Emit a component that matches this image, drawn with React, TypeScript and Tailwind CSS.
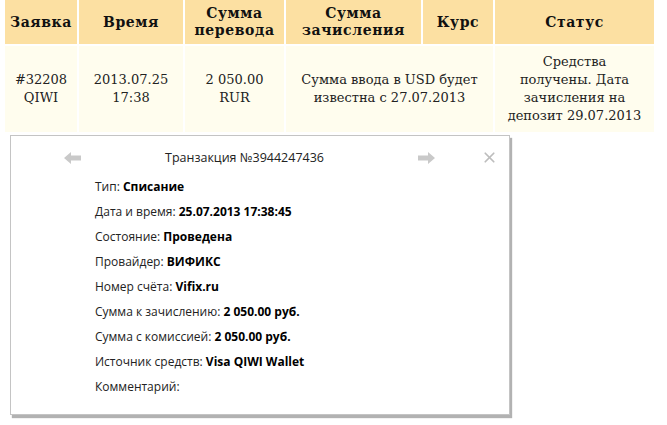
import { X } from "lucide-react";

const cols = [
  { w: "w-[72px]", head: ["Заявка"] },
  { w: "w-[104px]", head: ["Время"] },
  { w: "w-[99px]", head: ["Сумма", "перевода"] },
  { w: "w-[135px]", head: ["Сумма", "зачисления"] },
  { w: "w-[70px]", head: ["Курс"] },
  { w: "w-[159px]", head: ["Статус"] },
];

// Сумма зачисления и курс в строке объединены (colspan)
const cells = [
  { w: "w-[72px]", body: ["#32208", "QIWI"] },
  { w: "w-[104px]", body: ["2013.07.25", "17:38"] },
  { w: "w-[99px]", body: ["2 050.00", "RUR"] },
  { w: "w-[207px]", body: ["Сумма ввода в USD будет", "известна с 27.07.2013"] },
  { w: "w-[159px]", body: ["Средства", "получены. Дата", "зачисления на", "депозит 29.07.2013"] },
];

const rows: [string, string][] = [
  ["Тип:", "Списание"],
  ["Дата и время:", "25.07.2013 17:38:45"],
  ["Состояние:", "Проведена"],
  ["Провайдер:", "ВИФИКС"],
  ["Номер счёта:", "Vifix.ru"],
  ["Сумма к зачислению:", "2 050.00 руб."],
  ["Сумма с комиссией:", "2 050.00 руб."],
  ["Источник средств:", "Visa QIWI Wallet"],
  ["Комментарий:", ""],
];

function Arrow({ dir }: { dir: "left" | "right" }) {
  return (
    <svg width="18" height="12" viewBox="0 0 18 12" className={dir === "left" ? "" : "rotate-180"}>
      <path d="M0 6 L7 0 L7 3.5 L17 3.5 L17 8.5 L7 8.5 L7 12 Z" fill="#c9c9c9" />
    </svg>
  );
}

export default function App() {
  return (
    <div className="relative w-[667px] h-[425px] bg-white overflow-hidden">
      {/* Таблица заявок */}
      <div className="ml-[5px] w-[649px] flex flex-col gap-[2px] bg-white">
        <div className="flex gap-[2px] h-[44px]">
          {cols.map((c, i) => (
            <div
              key={i}
              className={`${c.w} shrink-0 bg-[#fce0a2] flex flex-col items-center justify-center text-[14px] leading-[17px] font-bold tracking-[0.6px] text-[#111]`}
              style={{ fontFamily: '"DejaVu Serif", serif' }}
            >
              {c.head.map((t) => (
                <span key={t}>{t}</span>
              ))}
            </div>
          ))}
        </div>
        <div className="flex gap-[2px] h-[86px]">
          {cells.map((c, i) => (
            <div
              key={i}
              className={`${c.w} shrink-0 bg-[#fffdee] flex flex-col items-center justify-center text-[13px] leading-[18px] text-[#222] whitespace-nowrap`}
              style={{ fontFamily: '"DejaVu Serif", serif' }}
            >
              {c.body.map((t) => (
                <span key={t}>{t}</span>
              ))}
            </div>
          ))}
        </div>
      </div>

      {/* Окно транзакции */}
      <div
        className="absolute left-[10px] top-[135px] w-[500px] h-[280px] bg-white border border-[#c4c4c4] shadow-[2px_3px_1px_rgba(0,0,0,0.3)] text-[#222]"
        style={{ fontFamily: '"Open Sans", "Noto Sans", sans-serif' }}
      >
        <div className="relative h-[38px] text-[12.5px]">
          <div className="absolute left-[53px] top-[16px]">
            <Arrow dir="left" />
          </div>
          <span className="absolute left-[154px] top-[13px] leading-[18px]">Транзакция №3944247436</span>
          <div className="absolute left-[406px] top-[16px]">
            <Arrow dir="right" />
          </div>
          <X className="absolute left-[470px] top-[13px] text-[#bdbdbd]" size={17} strokeWidth={2.4} />
        </div>
        <div className="pl-[84px] flex flex-col text-[12px] leading-[25px]">
          {rows.map(([k, v]) => (
            <div key={k}>
              {k} <b className="font-bold text-black">{v}</b>
            </div>
          ))}
        </div>
      </div>
    </div>
  );
}
